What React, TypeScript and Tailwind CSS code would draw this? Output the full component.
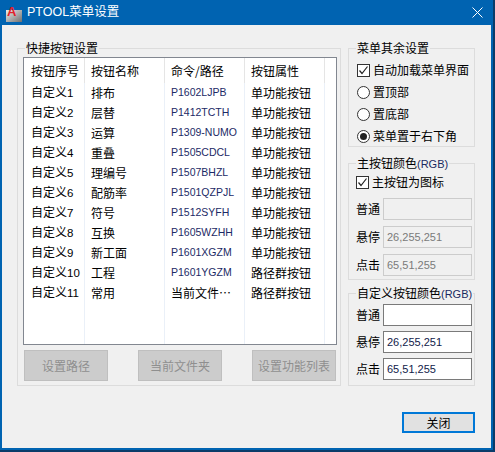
import React from 'react';

const rows: [string, string, string, string][] = [
  ['自定义1', '排布', 'P1602LJPB', '单功能按钮'],
  ['自定义2', '层替', 'P1412TCTH', '单功能按钮'],
  ['自定义3', '运算', 'P1309-NUMO', '单功能按钮'],
  ['自定义4', '重叠', 'P1505CDCL', '单功能按钮'],
  ['自定义5', '理编号', 'P1507BHZL', '单功能按钮'],
  ['自定义6', '配筋率', 'P1501QZPJL', '单功能按钮'],
  ['自定义7', '符号', 'P1512SYFH', '单功能按钮'],
  ['自定义8', '互换', 'P1605WZHH', '单功能按钮'],
  ['自定义9', '新工面', 'P1601XGZM', '单功能按钮'],
  ['自定义10', '工程', 'P1601YGZM', '路径群按钮'],
  ['自定义11', '常用', '当前文件…', '路径群按钮'],
];

const headers = ['按钮序号', '按钮名称', '命令/路径', '按钮属性'];
const colWidths = ['w-[61px]', 'w-[80px]', 'w-[80px]', 'w-[80px]'];

// 序号列: 汉字 + 数字
const SeqCell = ({ text }: { text: string }) => {
  const m = text.match(/^(\D+)(\d+)$/);
  if (!m) return <span>{text}</span>;
  return (
    <span>
      {m[1]}
      <span className="font-['Liberation_Sans'] text-[11.5px]">{m[2]}</span>
    </span>
  );
};

const GroupBox: React.FC<{ title: React.ReactNode; className?: string; children: React.ReactNode }> = ({
  title,
  className,
  children,
}) => (
  <div className={`relative border border-[#dcdcdc] ${className ?? ''}`}>
    <div className="absolute -top-[8px] left-[7px] bg-[#f0f0f0] px-[1px] text-[12px] leading-[14px] text-black">
      {title}
    </div>
    {children}
  </div>
);

const CheckBox = ({ label }: { label: string }) => (
  <div className="flex h-[22px] items-center">
    <div className="flex h-[13px] w-[13px] items-center justify-center border border-[#333] bg-white">
      <svg width="11" height="11" viewBox="0 0 11 11">
        <polyline points="1.5,5.5 4,8.5 9.5,1.5" fill="none" stroke="#222" strokeWidth="1.2" />
      </svg>
    </div>
    <span className="ml-[3px] text-[12px]">{label}</span>
  </div>
);

const Radio = ({ label, checked }: { label: string; checked?: boolean }) => (
  <div className="flex h-[22px] items-center">
    <div className="flex h-[13px] w-[13px] items-center justify-center rounded-full border border-[#333] bg-white">
      {checked && <div className="h-[7px] w-[7px] rounded-full bg-[#222]" />}
    </div>
    <span className="ml-[3px] text-[12px]">{label}</span>
  </div>
);

const ColorField = ({ label, value, disabled }: { label: string; value: string; disabled?: boolean }) => (
  <div className="flex h-[22px] items-center">
    <span className="w-[27px] shrink-0 text-[12px]">{label}</span>
    <div
      className={`flex h-[22px] w-[89px] items-center border pl-[3px] font-['Liberation_Sans'] text-[11px] ${
        disabled ? 'border-[#cccccc] bg-[#f0f0f0] text-[#7a7a7a]' : 'border-[#7a7a7a] bg-white text-[#111a4a]'
      }`}
    >
      {value}
    </div>
  </div>
);

const RGB = () => <span className="font-['Liberation_Sans'] text-[11px] text-[#1a2a60]">(RGB)</span>;

export default function App() {
  return (
    <div className="flex h-[452px] w-[495px] flex-col bg-[#0a3c6a] pb-[2px] pr-[2px] font-['Noto_Sans_CJK_SC','Liberation_Sans',sans-serif] text-black">
      {/* 标题栏 */}
      <div className="flex h-[25px] shrink-0 items-center bg-[#0063b1] pl-[6px] text-white">
        <svg width="16" height="17" viewBox="0 0 16 17" className="mt-[1px]">
          <defs>
            <linearGradient id="ig" x1="0" y1="0" x2="1" y2="1">
              <stop offset="0" stopColor="#ececec" />
              <stop offset="1" stopColor="#707070" />
            </linearGradient>
          </defs>
          <rect x="0" y="5" width="16" height="12" fill="url(#ig)" />
          <text x="1" y="11" fontSize="13" fontWeight="bold" fill="#e3202a" fontFamily="Liberation Sans">
            A
          </text>
        </svg>
        <span className="ml-[5px] font-['Liberation_Sans','Noto_Sans_CJK_SC',sans-serif] text-[12.5px]">PTOOL菜单设置</span>
        <div className="ml-auto mr-[6px] flex h-[25px] w-[20px] items-center justify-center">
          <svg width="11" height="11" viewBox="0 0 11 11">
            <path d="M0.5 0.5 L10.5 10.5 M10.5 0.5 L0.5 10.5" stroke="white" strokeWidth="1" />
          </svg>
        </div>
      </div>

      {/* 主体 */}
      <div className="flex flex-1 flex-col border-b-2 border-l-2 border-r-2 border-[#0063b1] bg-[#f0f0f0] pr-[16px]">
        <div className="flex pl-[15px] pt-[23px]">
          {/* 快捷按钮设置 */}
          <GroupBox title="快捷按钮设置" className="h-[338px] w-[324px] pl-[5px] pt-[8px]">
            <div className="flex h-[288px] w-[314px] border border-[#828790] bg-white">
              {headers.map((h, ci) => (
                <div key={h} className={`flex flex-col ${colWidths[ci]}`}>
                  <div
                    className={`flex h-[25px] shrink-0 items-center border-r border-[#e5e5e5] text-[12px] ${
                      ci === 0 ? 'pl-[7px]' : 'pl-[6px]'
                    }`}
                  >
                    {h}
                  </div>
                  <div className="flex-1 border-r border-[#eaf0f8]">
                    {rows.map((r) => (
                      <div
                        key={r[0]}
                        className={`flex h-[20px] items-center whitespace-nowrap text-[12px] ${
                          ci === 0 ? 'pl-[7px]' : 'pl-[6px]'
                        }`}
                      >
                        {ci === 0 ? (
                          <SeqCell text={r[0]} />
                        ) : ci === 2 && r[2].startsWith('P') ? (
                          <span className="font-['Liberation_Sans'] text-[10.5px] text-[#1c2a66]">{r[2]}</span>
                        ) : (
                          r[ci]
                        )}
                      </div>
                    ))}
                  </div>
                </div>
              ))}
              <div className="flex-1">
                <div className="h-[25px]" />
              </div>
            </div>

            <div className="ml-[1px] mt-[5px] flex w-[312px] justify-between">
              {['设置路径', '当前文件夹', '设置功能列表'].map((b) => (
                <div
                  key={b}
                  className="flex h-[31px] w-[84px] items-center justify-center border border-[#bfbfbf] bg-[#cccccc] text-[12px] text-[#8f8f8f]"
                >
                  {b}
                </div>
              ))}
            </div>
          </GroupBox>

          {/* 右侧 */}
          <div className="ml-[7px] flex w-[127px] flex-col">
            <GroupBox title="菜单其余设置" className="h-[99px] pl-[8px] pt-[10px]">
              <CheckBox label="自动加载菜单界面" />
              <Radio label="置顶部" />
              <Radio label="置底部" />
              <Radio label="菜单置于右下角" checked />
            </GroupBox>

            <GroupBox
              title={
                <>
                  主按钮颜色
                  <RGB />
                </>
              }
              className="mt-[16px] h-[117px] pl-[7px] pt-[7px]"
            >
              <CheckBox label="主按钮为图标" />
              <div className="mt-[5px] flex flex-col gap-[6px]">
                <ColorField label="普通" value="" disabled />
                <ColorField label="悬停" value="26,255,251" disabled />
                <ColorField label="点击" value="65,51,255" disabled />
              </div>
            </GroupBox>

            <GroupBox
              title={
                <>
                  自定义按钮颜色
                  <RGB />
                </>
              }
              className="mt-[13px] h-[93px] pl-[7px] pt-[10px]"
            >
              <div className="flex flex-col gap-[5px]">
                <ColorField label="普通" value="" />
                <ColorField label="悬停" value="26,255,251" />
                <ColorField label="点击" value="65,51,255" />
              </div>
            </GroupBox>
          </div>
        </div>

        <div className="mt-[26px] flex justify-end">
          <div className="flex h-[21px] w-[73px] items-center justify-center border-2 border-[#0078d7] bg-[#e1e1e1] text-[12px]">
            关闭
          </div>
        </div>
      </div>
    </div>
  );
}
